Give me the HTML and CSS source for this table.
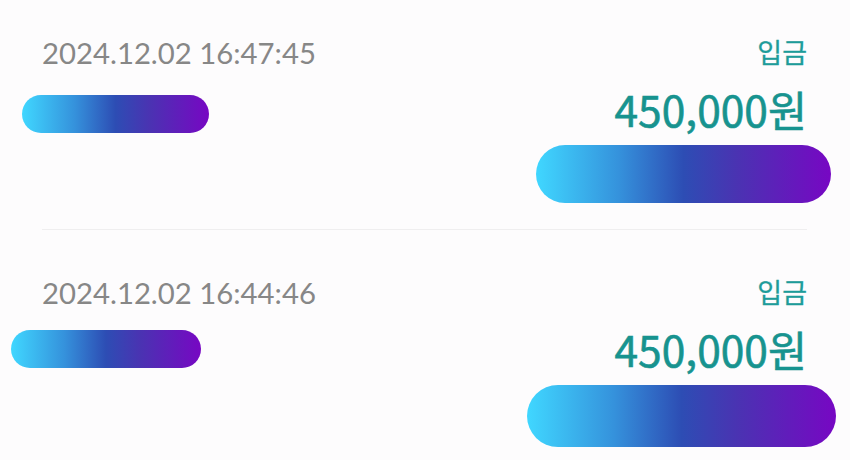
FILE: index.html
```html
<!DOCTYPE html>
<html lang="ko">
<head>
    <meta charset="UTF-8">
    <meta name="viewport" content="width=device-width, initial-scale=1.0">
    <title>입출금 내역</title>
    <link rel="stylesheet" href="styles.css">
</head>
<body>

    <div class="history">
        <div class="item">
            <div class="left">
                <p class="date">2024.12.02 16:47:45</p>
                <span class="mask mask-name"></span>
            </div>
            <div class="right">
                <p class="type">입금</p>
                <p class="amount">450,000원</p>
                <span class="mask mask-account"></span>
            </div>
        </div>

        <div class="item item-second">
            <div class="left">
                <p class="date">2024.12.02 16:44:46</p>
                <span class="mask mask-name wide"></span>
            </div>
            <div class="right">
                <p class="type">입금</p>
                <p class="amount">450,000원</p>
                <span class="mask mask-account wide"></span>
            </div>
        </div>
    </div>

</body>
</html>
```

FILE: styles.css
```css
body {
    margin: 0;
    background-color: #fdfcfd;
    font-family: "Noto Sans CJK KR", "Noto Sans", sans-serif;
}
p {
    margin: 0;
}
.history {
    padding: 35px 43px 0 42px;
}
.item {
    display: flex;
    justify-content: space-between;
    align-items: flex-start;
    height: 194px;
}
.item-second {
    border-top: 1px solid #efeeef;
    padding-top: 45px;
}
.left, .right {
    display: flex;
    flex-direction: column;
}
.right {
    align-items: flex-end;
}
.date {
    font-family: Lato, "Liberation Sans", sans-serif;
    font-size: 29.3px;
    line-height: 36px;
    color: #878787;
}
.type {
    font-size: 27px;
    line-height: 34px;
    color: #1d9c9a;
    -webkit-text-stroke: 0.3px #1d9c9a;
}
.amount {
    margin-top: 16px;
    font-size: 42.5px;
    line-height: 48px;
    color: #17938f;
    -webkit-text-stroke: 0.6px #17938f;
}
.mask {
    display: block;
    border-radius: 999px;
    background: linear-gradient(90deg, #40d7ff 0%, #3592dc 28%, #2d4db4 50%, #4a33b2 68%, #7707c3 100%);
}
.mask-name {
    width: 187px;
    height: 38px;
    margin: 24px 0 0 -20px;
}
.mask-name.wide {
    width: 190px;
    margin: 19px 0 0 -31px;
}
.mask-account {
    width: 295px;
    height: 58px;
    margin: 12px -24px 0 0;
}
.mask-account.wide {
    width: 309px;
    height: 62px;
    margin-right: -29px;
}
```
